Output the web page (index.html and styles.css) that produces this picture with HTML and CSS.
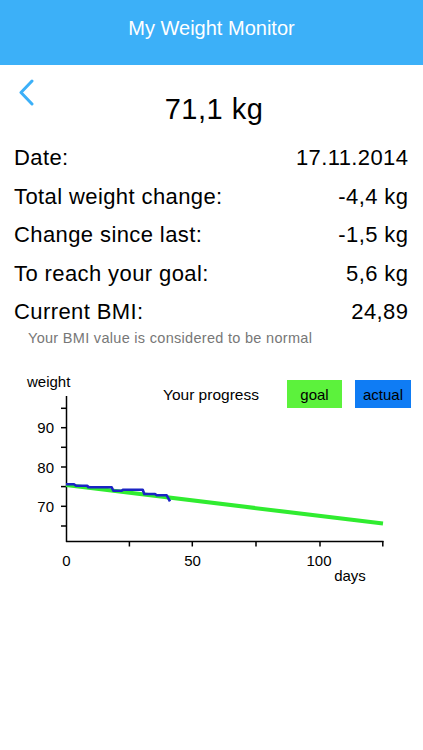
FILE: index.html
```html
<!DOCTYPE html>
<html>
<head>
<meta charset="utf-8">
<link rel="stylesheet" href="styles.css">
</head>
<body>
<header class="navbar">My Weight Monitor</header>
<main class="content">
  <div class="top">
    <a class="back" href="#" aria-label="Back">
      <svg width="16" height="28" viewBox="0 0 16 28"><path d="M13 2 L2 13.5 L13 25" fill="none" stroke="#3cb0f8" stroke-width="3" stroke-linecap="round" stroke-linejoin="round"/></svg>
    </a>
    <div class="weight">71,1 kg</div>
    <div></div>
  </div>
  <div class="rows">
    <div class="row"><span>Date:</span><span>17.11.2014</span></div>
    <div class="row"><span>Total weight change:</span><span>-4,4 kg</span></div>
    <div class="row"><span>Change since last:</span><span>-1,5 kg</span></div>
    <div class="row"><span>To reach your goal:</span><span>5,6 kg</span></div>
    <div class="row"><span>Current BMI:</span><span>24,89</span></div>
  </div>
  <p class="note">Your BMI value is considered to be normal</p>
  <svg class="chart" width="423" height="250" viewBox="0 346 423 250">
    <text class="lbl" x="27" y="387">weight</text>
    <text class="lbl title" x="163" y="400">Your progress</text>
    <rect x="287" y="380" width="55" height="28" fill="#5cf23c"/>
    <text class="lbl" x="314.5" y="399.5" text-anchor="middle">goal</text>
    <rect x="355" y="380" width="56" height="28" fill="#0f7cf4"/>
    <text class="lbl" x="383" y="399.5" text-anchor="middle" fill="#fff">actual</text>
    <g stroke="#000" stroke-width="1.5">
      <line x1="66.5" y1="396" x2="66.5" y2="542"/>
      <line x1="66" y1="541.5" x2="383.5" y2="541.5"/>
      <line x1="61" y1="408.3" x2="66" y2="408.3"/>
      <line x1="61" y1="427.7" x2="66" y2="427.7"/>
      <line x1="61" y1="447.3" x2="66" y2="447.3"/>
      <line x1="61" y1="467" x2="66" y2="467"/>
      <line x1="61" y1="486.6" x2="66" y2="486.6"/>
      <line x1="61" y1="506.3" x2="66" y2="506.3"/>
      <line x1="61" y1="526" x2="66" y2="526"/>
      <line x1="129.4" y1="541" x2="129.4" y2="546.5"/>
      <line x1="192.3" y1="541" x2="192.3" y2="546.5"/>
      <line x1="256" y1="541" x2="256" y2="546.5"/>
      <line x1="320" y1="541" x2="320" y2="546.5"/>
      <line x1="382.8" y1="541" x2="382.8" y2="546.5"/>
    </g>
    <g class="lbl" text-anchor="end">
      <text x="54" y="433">90</text>
      <text x="54" y="472.5">80</text>
      <text x="54" y="511.5">70</text>
    </g>
    <g class="lbl" text-anchor="middle">
      <text x="66.5" y="566">0</text>
      <text x="192.5" y="566">50</text>
      <text x="319" y="566">100</text>
      <text x="350" y="581">days</text>
    </g>
    <line x1="66" y1="485" x2="383" y2="523.6" stroke="#30ec30" stroke-width="4"/>
    <polyline fill="none" stroke="#1b24c4" stroke-width="2.6" stroke-linejoin="round"
      points="66,484.3 74,484.3 76,485.7 87.3,485.7 88.3,487.3 111.7,487.3 113.3,490.7 121.7,490.7 123.3,489.7 142.7,489.7 144.3,494 155,494 156.7,495.3 166.7,495.3 170,501.3"/>
  </svg>
</main>
</body>
</html>
```
FILE: styles.css
```css
* { box-sizing: border-box; }
html, body { margin: 0; padding: 0; background: #fff; }
body {
  width: 423px;
  height: 750px;
  font-family: "Liberation Sans", Arial, sans-serif;
  color: #000;
  overflow: hidden;
}
.navbar {
  height: 65px;
  padding-bottom: 9px;
  background: #3cb0f8;
  color: #fff;
  font-size: 20px;
  line-height: 56px;
  text-align: center;
}
.content { display: flex; flex-direction: column; }
.top {
  display: grid;
  grid-template-columns: 1fr auto 1fr;
  align-items: start;
  padding: 14px 14px 0 19px;
}
.back { display: block; width: 16px; height: 28px; }
.back svg { display: block; }
.weight {
  margin-top: 10px;
  font-size: 29px;
  line-height: 40px;
  letter-spacing: 0.5px;
  text-align: center;
}
.rows {
  margin-top: 10px;
  padding: 0 15px 0 14px;
  display: flex;
  flex-direction: column;
}
.row {
  display: flex;
  justify-content: space-between;
  font-size: 22px;
  line-height: 38.5px;
  height: 38.5px;
  letter-spacing: 0.4px;
}
.row span:last-child { margin-right: -0.4px; }
.note {
  margin: -2px 0 0 28px;
  font-size: 14.5px;
  line-height: 16px;
  letter-spacing: 0.3px;
  color: #777;
}
.chart { display: block; }
.lbl { font-family: "Liberation Sans", Arial, sans-serif; font-size: 15px; fill: #000; }
.title { font-size: 15.5px; }
```
